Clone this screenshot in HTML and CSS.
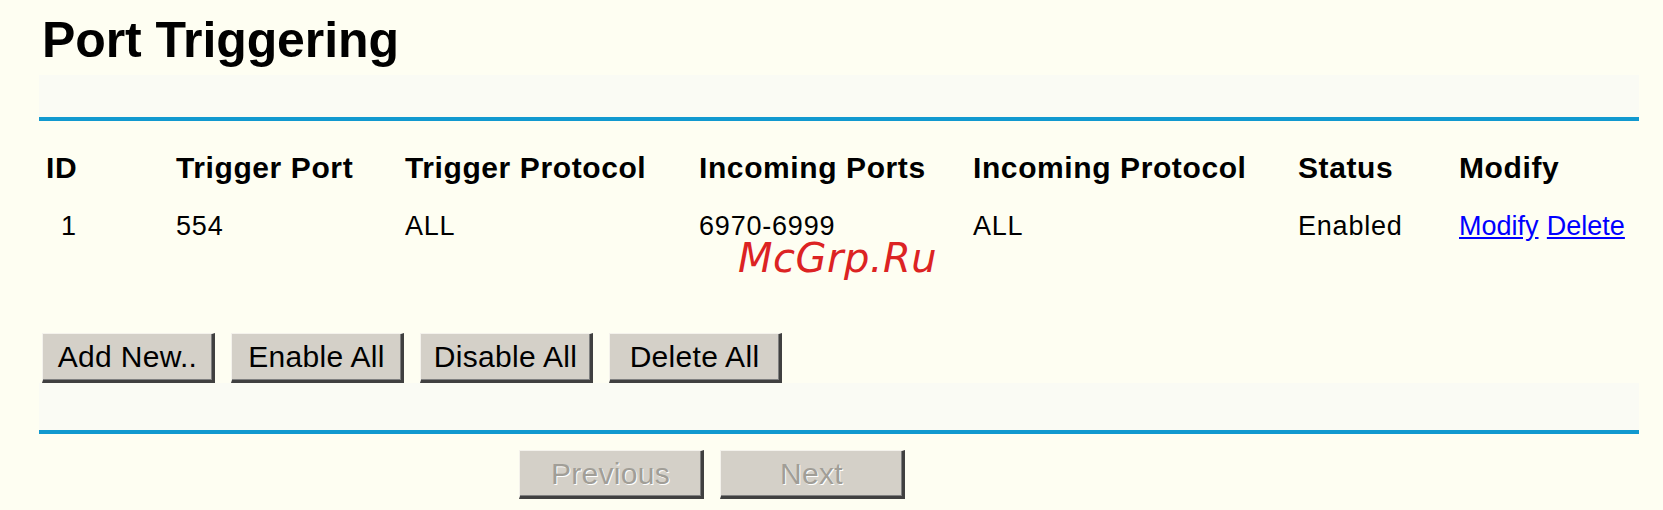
FILE: index.html
```html
<!DOCTYPE html>
<html>
<head>
<meta charset="utf-8">
<title>Port Triggering</title>
<link rel="stylesheet" href="styles.css">
</head>
<body>
<div class="page">
  <h1 class="title">Port Triggering</h1>
  <div class="band"></div>
  <div class="rule"></div>
  <div class="grid">
    <div class="cell head">ID</div>
    <div class="cell head">Trigger Port</div>
    <div class="cell head">Trigger Protocol</div>
    <div class="cell head">Incoming Ports</div>
    <div class="cell head">Incoming Protocol</div>
    <div class="cell head">Status</div>
    <div class="cell head">Modify</div>

    <div class="cell data id">1</div>
    <div class="cell data">554</div>
    <div class="cell data">ALL</div>
    <div class="cell data">6970-6999</div>
    <div class="cell data">ALL</div>
    <div class="cell data">Enabled</div>
    <div class="cell data"><a href="#" class="link">Modify</a> <a href="#" class="link">Delete</a></div>
  </div>
  <div class="actions">
    <button class="btn" type="button">Add New..</button>
    <button class="btn" type="button">Enable All</button>
    <button class="btn" type="button">Disable All</button>
    <button class="btn" type="button">Delete All</button>
  </div>
  <div class="band band2"></div>
  <div class="rule"></div>
  <div class="pager">
    <button class="btn btn-page" type="button" disabled>Previous</button>
    <button class="btn btn-page" type="button" disabled>Next</button>
  </div>
  <div class="watermark">McGrp.Ru</div>
</div>
</body>
</html>
```
FILE: styles.css
```css
html, body {
  margin: 0;
  padding: 0;
  background: #fefef2;
}

body {
  font-family: "Liberation Sans", Arial, sans-serif;
  color: #000;
}

.page {
  position: relative;
  width: 1600px;
  padding-left: 39px;
  height: 510px;
}

.title {
  margin: 0;
  padding: 15px 0 0 3px;
  height: 50px;
  font-size: 50px;
  line-height: 50px;
  font-weight: bold;
  letter-spacing: -0.1px;
}

.band {
  margin-top: 10px;
  height: 42px;
  background: #fafbf4;
}

.band2 {
  margin-top: 0;
  height: 47px;
}

.rule {
  height: 4px;
  background: #1199cf;
}

.grid {
  display: grid;
  grid-template-columns: 130px 229px 294px 274px 325px 161px auto;
  padding: 18px 0 0 7px;
}

.cell {
  white-space: nowrap;
}

.head {
  font-size: 30px;
  font-weight: bold;
  line-height: 58px;
  height: 58px;
  letter-spacing: 0.6px;
}

.data {
  font-size: 27px;
  line-height: 58px;
  height: 58px;
  letter-spacing: 0.8px;
}

.id {
  padding-left: 15px;
}

.link {
  color: #0000ff;
  text-decoration: underline;
  letter-spacing: 0;
}

.actions {
  display: flex;
  gap: 16px;
  margin-top: 78px;
  padding-left: 3px;
}

.btn {
  box-sizing: border-box;
  width: 173px;
  height: 50px;
  padding: 0;
  margin: 0;
  font-family: "Liberation Sans", Arial, sans-serif;
  font-size: 30px;
  letter-spacing: 0.3px;
  color: #000;
  background: #d4d0c8;
  border-style: solid;
  border-width: 1px 3px 3px 1px;
  border-color: #f4f2ec #404040 #404040 #f4f2ec;
  box-shadow: inset -1px -1px 0 #808080;
}

.pager {
  display: flex;
  gap: 16px;
  margin-top: 16px;
  padding-left: 480px;
}

.btn-page {
  width: 185px;
  height: 49px;
}

.btn-page:disabled {
  color: #a19e97;
  text-shadow: 1px 1px 0 #ffffff;
}

.watermark {
  position: absolute;
  left: 738px;
  top: 238px;
  font-family: "DejaVu Sans", sans-serif;
  font-style: italic;
  font-size: 40px;
  line-height: 40px;
  color: #dc2323;
  letter-spacing: 0.5px;
}
```
